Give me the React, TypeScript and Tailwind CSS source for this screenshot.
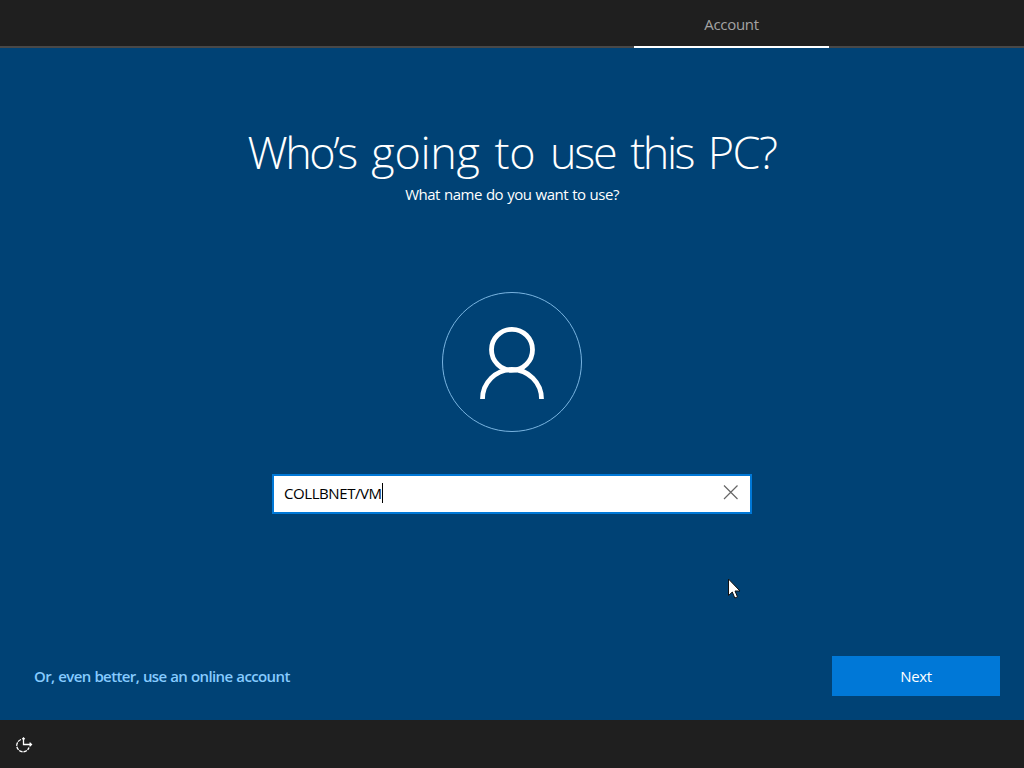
import React, { useState } from "react";

function SetupHeader() {
  return (
    <header className="flex h-12 shrink-0 border-b-2 border-[#484848] bg-[#1f1f1f] pl-[634px]">
      <div className="flex h-12 w-[195px] items-center justify-center border-b-2 border-white pt-[3px] text-[15px] text-[#a3a3a3]">
        <span className="tracking-[-0.33px]">Account</span>
      </div>
    </header>
  );
}

function Avatar() {
  return (
    <svg width="140" height="140" viewBox="0 0 140 140" fill="none" className="mt-[87px] shrink-0">
      <circle cx="70" cy="70" r="69.5" stroke="#79b4e0" />
      <circle cx="70" cy="57.8" r="20.5" stroke="#fff" strokeWidth="4.8" />
      <path d="M40.500 107A29.500 29.500 0 0 1 99.500 107" stroke="#fff" strokeWidth="4.8" />
    </svg>
  );
}

function NameField() {
  const [name, setName] = useState("COLLBNET/VM");
  return (
    <div className="mt-[42px] flex h-10 w-[480px] shrink-0 items-center border-2 border-[#0078d7] bg-white pl-[10px] pr-[11px]">
      <div className="-mt-0.5 flex min-w-0 flex-1 items-center">
        <span className="text-[15px] tracking-[-0.42px] text-black">{name}</span>
        <span className="h-5 w-px bg-black" />
      </div>
      <button aria-label="Clear" className="-mt-1 h-4 w-4" onClick={() => setName("")}>
        <svg width="16" height="16" viewBox="0 0 16 16" stroke="#666" strokeWidth="1.2">
          <path d="M1 1.500L14.500 15M14.500 1.500L1 15" />
        </svg>
      </button>
    </div>
  );
}

export default function App() {
  return (
    <div className="relative flex h-[768px] w-[1024px] flex-col overflow-hidden bg-[#004275] font-['Open_Sans','Noto_Sans',sans-serif] text-white">
      <SetupHeader />
      <main className="flex min-h-0 flex-1 flex-col items-center">
        <h1 className="mt-[73px] h-[62px] whitespace-nowrap text-[45px] font-light leading-[62px] tracking-[-0.3px] [word-spacing:3.3px]">
          <span className="mr-px tracking-[-2.5px]">Who’s</span> going to{" "}
          <span className="tracking-[-2.2px]">use</span>{" "}
          <span className="tracking-[-2.5px]">this</span>{" "}
          <span className="tracking-[-1.5px]">PC?</span>
        </h1>
        <p className="mt-[1px] h-[21px] whitespace-nowrap text-[15px] leading-[21px] tracking-[-0.5px] [word-spacing:0.7px]">
          What name do you want to use?
        </p>
        <Avatar />
        <NameField />
        <div className="mt-auto flex w-full items-center justify-between pb-6 pl-[34px] pr-6">
          <a className="whitespace-nowrap text-[15px] font-semibold tracking-[-0.62px] text-[#86cbff] [word-spacing:0.5px]">
            Or, even better, use an online account
          </a>
          <button className="h-10 w-[168px] bg-[#0078d7] text-[15px] tracking-[-0.3px]">Next</button>
        </div>
      </main>
      <footer className="flex h-12 shrink-0 items-center bg-[#1f1f1f] pl-[15px] pt-0.5">
        <svg width="18" height="18" viewBox="0 0 18 18" fill="none" stroke="#fff" strokeWidth="1.3">
          <path d="M6 3.500A6.300 6.300 0 1 0 14 11.500" strokeDasharray="3.600 0.900" />
          <path d="M8.500 2V8.500H16.500M14.600 6.600L16.500 8.500L14.600 10.400M7.300 3.300L8.500 2L9.700 3.300" />
        </svg>
      </footer>
      <svg className="absolute left-[728px] top-[578px]" width="14" height="22" viewBox="0 0 14 22">
        <path d="M0.500 1V17.500L4.300 14L6.800 20L9.500 18.900L7 13H12Z" fill="#fff" stroke="#111" strokeWidth="1" />
      </svg>
    </div>
  );
}
